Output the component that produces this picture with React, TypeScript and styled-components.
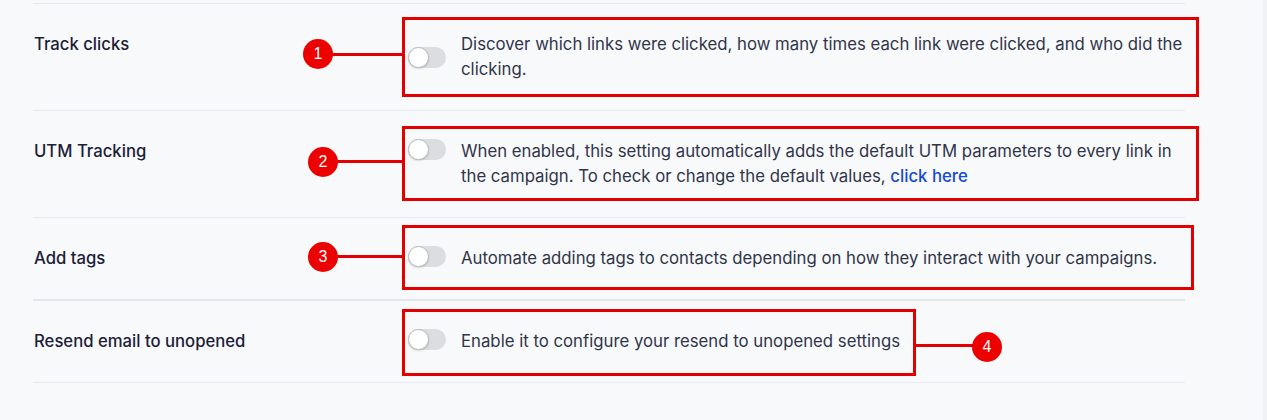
import React from "react";
import styled, { createGlobalStyle } from "styled-components";

const Global = createGlobalStyle`
  html, body { margin: 0; padding: 0; background: #f1f2f5; }
  body { font-family: Inter, "Noto Sans", "Liberation Sans", sans-serif; -webkit-font-smoothing: antialiased; }
`;

const Page = styled.div`
  position: relative;
  width: 1263px;
  height: 420px;
  background: #f8f9fb;
  padding: 3px 0 0 33px;
  box-sizing: border-box;
`;

const List = styled.div`
  width: 1152px;
  border-top: 1px solid #e7e9ee;
`;

const Row = styled.div<{ $thick?: boolean }>`
  display: grid;
  grid-template-columns: 375px 1fr;
  padding: 28px 0 28px;
  border-bottom: ${(p) => (p.$thick ? "2px solid #e4e6eb" : "1px solid #e7e9ee")};
`;

const Label = styled.div`
  font-size: 16.7px;
  line-height: 25px;
  font-weight: 450;
  color: #1c2038;
  padding-left: 1px;
`;

const Control = styled.div<{ $center?: boolean }>`
  display: flex;
  align-items: ${(p) => (p.$center ? "center" : "flex-start")};
  gap: 15px;
`;

const Track = styled.span`
  flex: none;
  position: relative;
  width: 38px;
  height: 21px;
  border-radius: 11px;
  background: #dcdde0;
`;

const Knob = styled.span`
  position: absolute;
  left: 0;
  top: 0;
  width: 19px;
  height: 19px;
  border-radius: 50%;
  background: #ffffff;
  border: 1px solid #b9bbbf;
  box-shadow: 0 1px 2px rgba(0, 0, 0, 0.15);
`;

const Desc = styled.p`
  margin: 0;
  max-width: 724px;
  font-size: 16.75px;
  line-height: 25px;
  font-weight: 400;
  color: #2f3549;
`;

const Link = styled.a`
  color: #1549d6;
  font-weight: 500;
  text-decoration: none;
`;

const Box = styled.div<{ $x: number; $y: number; $w: number; $h: number }>`
  position: absolute;
  left: ${(p) => p.$x}px;
  top: ${(p) => p.$y}px;
  width: ${(p) => p.$w}px;
  height: ${(p) => p.$h}px;
  border: 3px solid #e30000;
  box-sizing: border-box;
  pointer-events: none;
`;

const Connector = styled.div<{ $x: number; $y: number; $w: number }>`
  position: absolute;
  left: ${(p) => p.$x}px;
  top: ${(p) => p.$y}px;
  width: ${(p) => p.$w}px;
  height: 3px;
  background: #e30000;
`;

const Marker = styled.div<{ $cx: number; $cy: number }>`
  position: absolute;
  left: ${(p) => p.$cx - 15}px;
  top: ${(p) => p.$cy - 15}px;
  width: 30px;
  height: 30px;
  border-radius: 50%;
  background: #ec0000;
  color: #ffffff;
  display: flex;
  align-items: center;
  justify-content: center;
  font-family: "Liberation Sans", Arial, sans-serif;
  font-size: 16px;
  line-height: 1;
`;

const Toggle = () => (
  <Track>
    <Knob />
  </Track>
);

type Annot = { n: number; box: [number, number, number, number]; cx: number; cy: number; line: [number, number, number] };

const annots: Annot[] = [
  { n: 1, box: [402, 17, 797, 80], cx: 318, cy: 54, line: [330, 53, 74] },
  { n: 2, box: [402, 126, 797, 75], cx: 323, cy: 162, line: [335, 160, 69] },
  { n: 3, box: [402, 225, 792, 65], cx: 323, cy: 257, line: [335, 255, 69] },
  { n: 4, box: [402, 309, 514, 67], cx: 987, cy: 347, line: [914, 344, 62] },
];

export default function App() {
  return (
    <>
      <Global />
      <Page>
        <List>
          <Row>
            <Label>Track clicks</Label>
            <Control $center>
              <Toggle />
              <Desc>
                Discover which links were clicked, how many times each link were clicked, and who did the clicking.
              </Desc>
            </Control>
          </Row>
          <Row>
            <Label>UTM Tracking</Label>
            <Control>
              <Toggle />
              <Desc>
                When enabled, this setting automatically adds the default UTM parameters to every link in the
                campaign. To check or change the default values, <Link href="#">click here</Link>
              </Desc>
            </Control>
          </Row>
          <Row $thick>
            <Label>Add tags</Label>
            <Control>
              <Toggle />
              <Desc>Automate adding tags to contacts depending on how they interact with your campaigns.</Desc>
            </Control>
          </Row>
          <Row>
            <Label>Resend email to unopened</Label>
            <Control>
              <Toggle />
              <Desc>Enable it to configure your resend to unopened settings</Desc>
            </Control>
          </Row>
        </List>
        {annots.map((a) => (
          <React.Fragment key={a.n}>
            <Connector $x={a.line[0]} $y={a.line[1]} $w={a.line[2]} />
            <Box $x={a.box[0]} $y={a.box[1]} $w={a.box[2]} $h={a.box[3]} />
            <Marker $cx={a.cx} $cy={a.cy}>{a.n}</Marker>
          </React.Fragment>
        ))}
      </Page>
    </>
  );
}
